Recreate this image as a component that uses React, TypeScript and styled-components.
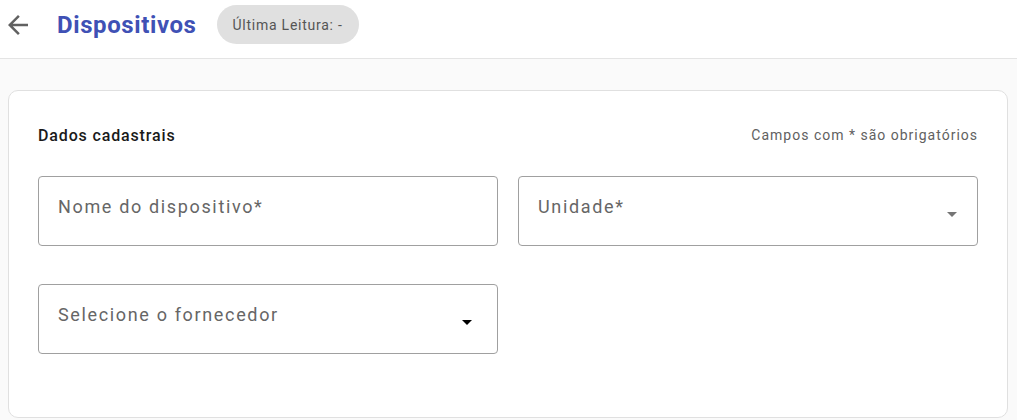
import React from 'react';
import styled, { createGlobalStyle } from 'styled-components';

const GlobalStyle = createGlobalStyle`
  html, body {
    margin: 0;
    padding: 0;
    background: #fafafa;
    font-family: Roboto, "Liberation Sans", Arial, sans-serif;
  }
`

const Header = styled.header`
  display: flex;
  flex-direction: row;
  align-items: center;
  height: 39px;
  padding: 5px 0 14px 3px;
  background: #ffffff;
  border-bottom: 1px solid #e4e4e4;
`

const BackButton = styled.button`
  display: flex;
  align-items: center;
  justify-content: center;
  width: 30px;
  height: 30px;
  padding: 0;
  border: none;
  background: transparent;
  color: #616161;
  cursor: pointer;
`

const PageTitle = styled.h1`
  margin: 0 20px 0 24px;
  font-size: 24px;
  font-weight: 700;
  letter-spacing: 0.6px;
  color: #3f51b5;
`

const Chip = styled.span`
  display: inline-flex;
  align-items: center;
  height: 39px;
  padding: 0 16px;
  border-radius: 20px;
  background: #e0e0e0;
  color: #555555;
  font-size: 14px;
  letter-spacing: 0.75px;
`

const Content = styled.main`
  padding: 31px 9px 0 8px;
`

const Card = styled.section`
  background: #ffffff;
  border: 1px solid #e0e0e0;
  border-radius: 10px;
  padding: 30px 29px 63px 29px;
`

const CardHeader = styled.div`
  display: flex;
  align-items: center;
  justify-content: space-between;
  height: 28px;
  margin-bottom: 27px;
`

const SectionTitle = styled.h2`
  margin: 0;
  font-size: 16px;
  font-weight: 500;
  letter-spacing: 0.85px;
  color: #1a1a1a;
`

const Hint = styled.span`
  font-size: 14px;
  color: #616161;
  letter-spacing: 1px;
`

const Grid = styled.div`
  display: grid;
  grid-template-columns: 1fr 1fr;
  column-gap: 20px;
  row-gap: 38px;
`

const Field = styled.div<{ $arrowInset?: number }>`
  display: flex;
  align-items: center;
  justify-content: space-between;
  box-sizing: border-box;
  height: 70px;
  padding: 0 ${p => p.$arrowInset ?? 18}px 10px 19px;
  border: 1px solid #a0a0a0;
  border-radius: 4px;
`

const Label = styled.span`
  font-size: 18px;
  color: #666666;
  letter-spacing: 1.65px;
`

const Arrow = styled.svg<{ $dark?: boolean }>`
  width: 24px;
  height: 24px;
  margin-top: 16px;
  fill: ${p => (p.$dark ? '#000000' : '#757575')};
`

const DropIcon: React.FC<{ dark?: boolean }> = ({ dark }) => (
  <Arrow viewBox="0 0 24 24" $dark={dark}>
    <path d="M7 10l5 5 5-5z" />
  </Arrow>
);

const App: React.FC = () => {
  return (
    <>
      <GlobalStyle />
      <Header>
        <BackButton aria-label="voltar">
          <svg width="30" height="30" viewBox="0 0 24 24" fill="currentColor">
            <path d="M20 11H7.83l5.59-5.59L12 4l-8 8 8 8 1.41-1.41L7.83 13H20v-2z" />
          </svg>
        </BackButton>
        <PageTitle>Dispositivos</PageTitle>
        <Chip>Última Leitura: -</Chip>
      </Header>
      <Content>
        <Card>
          <CardHeader>
            <SectionTitle>Dados cadastrais</SectionTitle>
            <Hint>Campos com * são obrigatórios</Hint>
          </CardHeader>
          <Grid>
            <Field>
              <Label>Nome do dispositivo*</Label>
            </Field>
            <Field $arrowInset={13}>
              <Label>Unidade*</Label>
              <DropIcon />
            </Field>
            <Field>
              <Label>Selecione o fornecedor</Label>
              <DropIcon dark />
            </Field>
          </Grid>
        </Card>
      </Content>
    </>
  );
};

export default App;
